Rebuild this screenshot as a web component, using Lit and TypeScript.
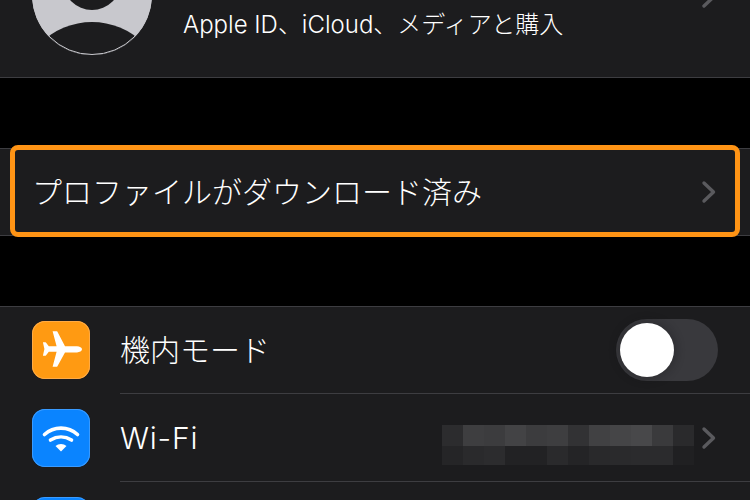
import { LitElement, html, css, svg } from 'lit';
import { customElement } from 'lit/decorators.js';

const chevron = html`<svg class="chevron" width="16" height="24" viewBox="0 0 16 24">
  <path d="M3 3 L12.5 12 L3 21" fill="none" stroke="#5a5a5e" stroke-width="3.4" stroke-linecap="round" stroke-linejoin="round" />
</svg>`;

const planeIcon = svg`<path fill="#fff" d="M50 28.300c0-1.800-2.400-3.100-5-3.100H33L25.300 10.600c-.2-.3-.5-.4-.8-.4h-3.900l4 15H16.800l-2.900-3.600c-.2-.3-.5-.4-.8-.4h-2.200l1.500 6.800-1.500 6.800h2.200c.3 0 .6-.1.8-.4l2.900-3.600h7.800l-4 15h3.900c.3 0 .6-.1.8-.4L33 31.400H45c2.600 0 5-1.300 5-3.100z" />`;

const wifiIcon = svg`
  <path d="M12.500 25.500a24.500 24.500 0 0 1 33 0" fill="none" stroke="#fff" stroke-width="3.600" stroke-linecap="round" />
  <path d="M18.500 31a20 20 0 0 1 21 0" fill="none" stroke="#fff" stroke-width="3.600" stroke-linecap="round" />
  <path fill="#fff" d="M29 42.500l-5.500-5.400a8 8 0 0 1 11 0z" />`;

// colours of the blurred-out network name, top row then bottom row
const blurCells = [
  '#2c2c2e', '#3e3e40', '#3c3c3e', '#434345', '#3c3c3e', '#3e3e40', '#323234', '#414143', '#454547', '#48484a', '#3a3a3c', '#2a2a2c',
  '#252527', '#2a2a2c', '#2c2c2e', '#222224', '#222224', '#2a2a2c', '#242426', '#29292b', '#2a2a2c', '#2b2b2d', '#2b2b2d', '#202022',
];

@customElement('app-root')
export class AppRoot extends LitElement {
  static styles = css`
    :host {
      display: block;
      height: 500px;
      overflow: hidden;
      background: #000;
      color: #fff;
      font-family: 'Inter', 'Noto Sans CJK JP', sans-serif;
      font-weight: 300;
    }

    .group {
      background: #1c1c1e;
      border-bottom: 1px solid #3d3d41;
    }

    .account {
      height: 77px;
      overflow: hidden;
      margin-bottom: 70px;
      padding-left: 32px;
      padding-right: 33px;
      display: flex;
      align-items: flex-end;
    }

    .avatar {
      flex: none;
      display: block;
      width: 120px;
      height: 120px;
      margin-bottom: 22px;
    }

    .account-text {
      flex: 1;
      margin-left: 31px;
      margin-bottom: 37px;
      font-size: 24px;
      line-height: 30px;
      white-space: nowrap;
    }

    .account .chevron {
      margin-bottom: 68px;
    }

    .profile-group {
      position: relative;
      border-top: 1px solid #3d3d41;
      margin-bottom: 70px;
    }

    .profile-row {
      height: 86px;
      padding: 0 33px 0 32px;
      display: flex;
      align-items: center;
      justify-content: space-between;
      font-size: 30px;
    }

    .ja {
      padding-bottom: 4px;
    }

    .highlight {
      position: absolute;
      left: 10px;
      right: 10px;
      top: -4px;
      bottom: -2px;
      border: 5px solid #ff9415;
      border-radius: 8px;
      box-sizing: border-box;
    }

    .settings {
      border-top: 1px solid #3d3d41;
      border-bottom: none;
    }

    .row {
      display: flex;
      align-items: center;
      height: 88px;
      padding-left: 32px;
      box-sizing: border-box;
    }

    .row.first {
      height: 87px;
    }

    .row.first .icon {
      margin-bottom: 1px;
    }

    .icon {
      flex: none;
      width: 58px;
      height: 58px;
      border-radius: 13px;
      display: block;
    }

    .icon.orange {
      background: #ff9a12;
      box-shadow: inset 0 0 0 1px #ffab45;
    }

    .icon.blue {
      background: #0a84ff;
      box-shadow: inset 0 0 0 1px #3a9bff;
    }

    .row-body {
      flex: 1;
      align-self: stretch;
      margin-left: 30px;
      padding-right: 32px;
      border-bottom: 1px solid #3d3d41;
      display: flex;
      align-items: center;
      justify-content: space-between;
      font-size: 30px;
    }

    .wifi-label {
      letter-spacing: 0.8px;
    }

    .toggle {
      width: 102px;
      height: 62px;
      border-radius: 31px;
      background: #39393d;
      padding: 4px;
      box-sizing: border-box;
    }

    .knob {
      width: 54px;
      height: 54px;
      border-radius: 50%;
      background: #fff;
      box-shadow: 0 0 10px 2px rgba(20, 20, 22, 0.3);
    }

    .wifi-value {
      display: flex;
      align-items: center;
      gap: 7px;
      padding-right: 1px;
    }

    .blur {
      display: grid;
      grid-template-columns: repeat(12, 21px);
      grid-template-rows: 21px 19px;
      margin-top: 15px;
    }
  `;

  render() {
    return html`
      <section class="group account">
        <svg class="avatar" viewBox="0 0 120 120">
          <defs><clipPath id="disc"><circle cx="60" cy="60" r="60" /></clipPath></defs>
          <circle cx="60" cy="60" r="60" fill="#c8c8cd" />
          <g clip-path="url(#disc)">
            <circle cx="60" cy="46" r="29" fill="#1c1c1e" />
            <circle cx="60" cy="160" r="73" fill="#1c1c1e" />
          </g>
          <circle cx="60" cy="60" r="59.500" fill="none" stroke="#c8c8cd" stroke-width="1" />
        </svg>
        <div class="account-text">Apple ID、iCloud、メディアと購入</div>
        ${chevron}
      </section>

      <section class="group profile-group">
        <div class="profile-row">
          <span class="ja">プロファイルがダウンロード済み</span>
          ${chevron}
        </div>
        <div class="highlight"></div>
      </section>

      <section class="group settings">
        <div class="row first">
          <svg class="icon orange" viewBox="0 0 58 58">${planeIcon}</svg>
          <div class="row-body">
            <span class="ja">機内モード</span>
            <div class="toggle"><div class="knob"></div></div>
          </div>
        </div>
        <div class="row">
          <svg class="icon blue" viewBox="0 0 58 58">${wifiIcon}</svg>
          <div class="row-body">
            <span class="wifi-label">Wi-Fi</span>
            <div class="wifi-value">
              <div class="blur">
                ${blurCells.map((c) => html`<i style="background:${c}"></i>`)}
              </div>
              ${chevron}
            </div>
          </div>
        </div>
        <div class="row">
          <div class="icon blue"></div>
          <div class="row-body"></div>
        </div>
      </section>
    `;
  }
}
